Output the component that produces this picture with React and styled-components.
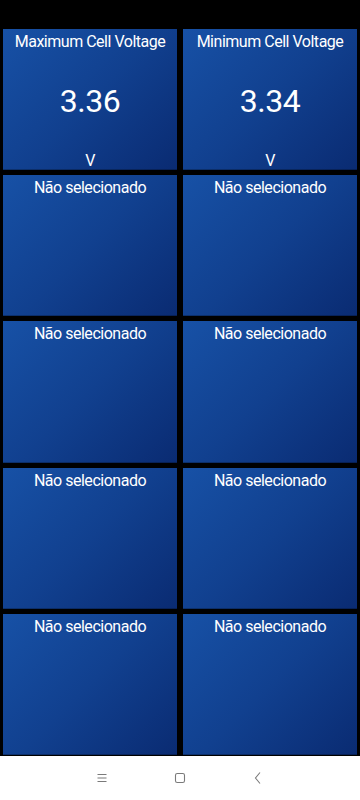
import React from "react";
import styled, { createGlobalStyle } from "styled-components";

const Global = createGlobalStyle`
  html, body { margin: 0; padding: 0; background: #000; }
  body { font-family: Roboto, "Noto Sans", sans-serif; }
  * { box-sizing: border-box; }
`;

const Screen = styled.div`
  width: 360px;
  height: 800px;
  display: flex;
  flex-direction: column;
  background: #000;
`;

const StatusBar = styled.div`
  height: 29px;
  flex: none;
  background: #000;
`;

const Grid = styled.div`
  height: 727px;
  flex: none;
  padding: 0 3px 1px;
  display: grid;
  grid-template-columns: 1fr 1fr;
  grid-template-rows: repeat(5, 1fr);
  column-gap: 6px;
  row-gap: 5px;
`;

const Card = styled.div`
  background: linear-gradient(135deg, #1751a6 0%, #11408f 50%, #0a2b72 100%);
  box-shadow: inset 0 -1px 0 rgba(0, 0, 0, 0.25);
  color: #fff;
  display: flex;
  flex-direction: column;
  align-items: center;
  justify-content: space-between;
  padding: 3px 4px 0;
  text-align: center;
  overflow: hidden;
  letter-spacing: -0.03em;
`;

const Title = styled.div`
  font-size: 16px;
  line-height: 19px;
  white-space: nowrap;
`;

const Value = styled.div`
  font-size: 32px;
  line-height: 38px;
`;

const Unit = styled.div`
  font-size: 16px;
  line-height: 19px;
`;

const Spacer = styled.div`
  height: 19px;
`;

const NavBar = styled.div`
  flex: 1;
  background: #fff;
  display: flex;
  align-items: center;
  justify-content: center;
`;

const NavButton = styled.div`
  width: 78px;
  display: flex;
  justify-content: center;
  align-items: center;
  color: #7a7a7a;
`;

const cards = [
  { title: "Maximum Cell Voltage", value: "3.36", unit: "V" },
  { title: "Minimum Cell Voltage", value: "3.34", unit: "V" },
  { title: "Não selecionado" },
  { title: "Não selecionado" },
  { title: "Não selecionado" },
  { title: "Não selecionado" },
  { title: "Não selecionado" },
  { title: "Não selecionado" },
  { title: "Não selecionado" },
  { title: "Não selecionado" },
];

export default function App() {
  return (
    <>
      <Global />
      <Screen>
        <StatusBar />
        <Grid>
          {cards.map((c, i) => (
            <Card key={i}>
              <Title>{c.title}</Title>
              {c.value ? <Value>{c.value}</Value> : null}
              {c.unit ? <Unit>{c.unit}</Unit> : <Spacer />}
            </Card>
          ))}
        </Grid>
        <NavBar>
          <NavButton>
            <svg width="12" height="12" viewBox="0 0 12 12">
              <path d="M1.5 2.5h9M1.5 6h9M1.5 9.5h9" stroke="currentColor" strokeWidth="1.1" fill="none" />
            </svg>
          </NavButton>
          <NavButton>
            <svg width="12" height="12" viewBox="0 0 12 12">
              <rect x="1.5" y="1.5" width="9" height="9" rx="1.8" stroke="currentColor" strokeWidth="1.1" fill="none" />
            </svg>
          </NavButton>
          <NavButton>
            <svg width="12" height="14" viewBox="0 0 12 14">
              <path d="M8 1.5L3.5 7L8 12.5" stroke="currentColor" strokeWidth="1.1" fill="none" />
            </svg>
          </NavButton>
        </NavBar>
      </Screen>
    </>
  );
}
